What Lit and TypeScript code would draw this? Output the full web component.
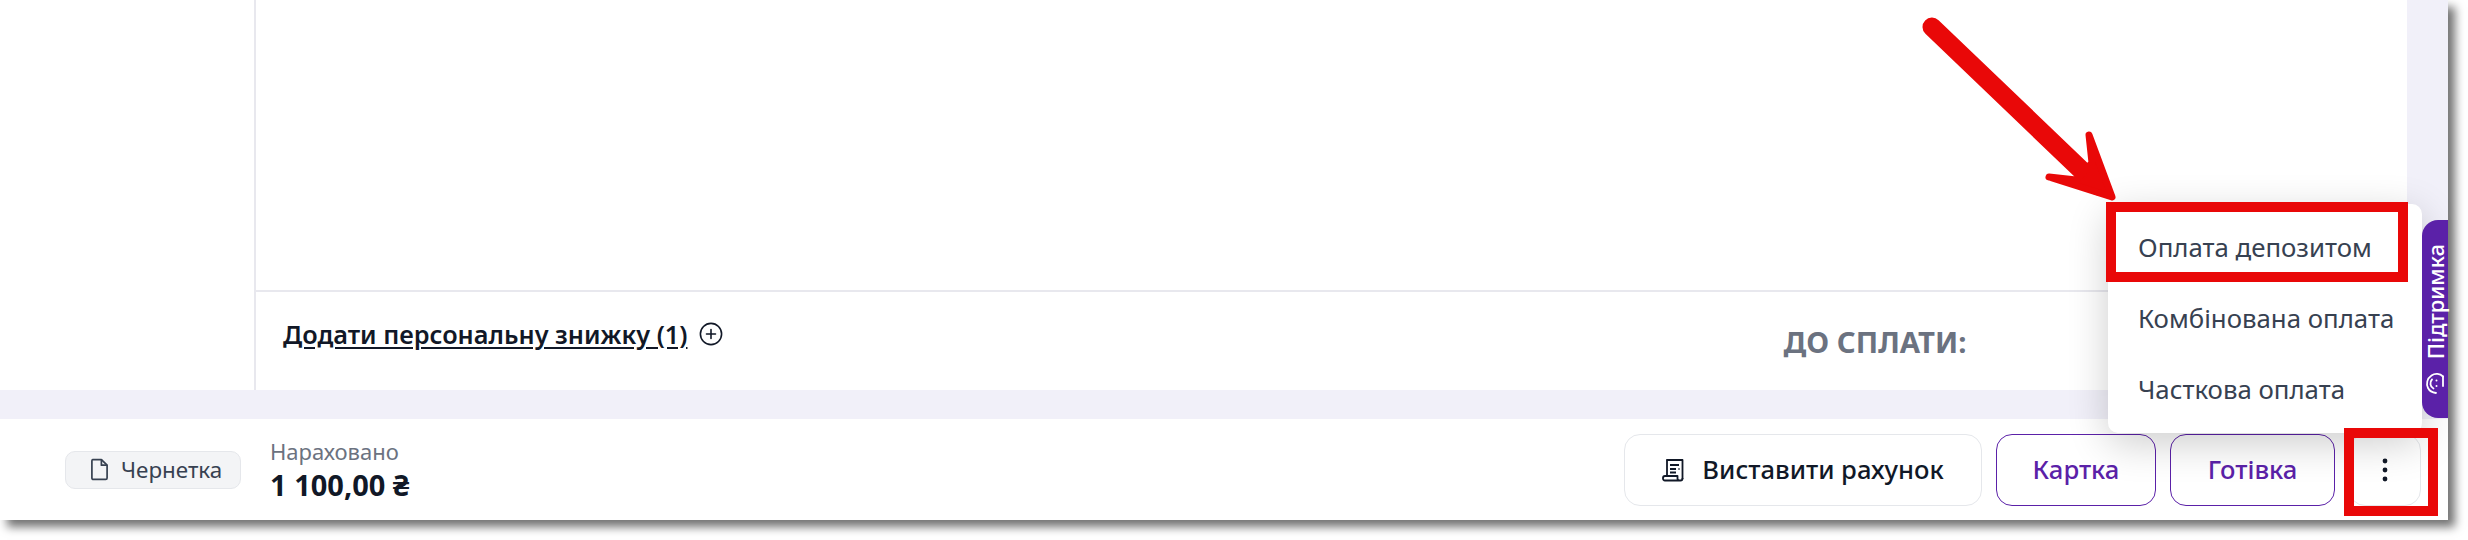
import { LitElement, html, css, svg } from "lit";
import { customElement } from "lit/decorators.js";

@customElement("app-root")
export class AppRoot extends LitElement {
  static styles = css`
    :host { display: block; height: 540px; background: #fff; font-family: "Noto Sans", sans-serif; color: #111827; }
    .shell { position: relative; width: 2448px; height: 520px; background: #f1f0f9; display: flex; flex-direction: column; box-shadow: 7px 7px 9px rgba(0,0,0,.55); }
    .top { height: 390px; display: flex; flex: none; }
    .side { width: 254px; background: #fff; flex: none; }
    .main { flex: 1; background: #fff; border-left: 2px solid #e8e8ee; display: flex; flex-direction: column; }
    .content { flex: 1; }
    .totals { height: 100px; box-sizing: border-box; flex: none; border-top: 2px solid #e8e8ee; display: flex; align-items: center; padding: 0 0 14px 27px; }
    .discount { font-size: 25.3px; font-weight: 600; text-decoration: underline; text-underline-offset: 3px; white-space: nowrap; }
    .plus { margin-left: 11px; width: 24px; height: 24px; flex: none; }
    .due { margin-left: 1061px; margin-top: 16px; font-size: 29.4px; font-weight: 700; color: #6b7280; white-space: nowrap; }
    .rail { width: 41px; flex: none; }
    .gap { height: 29px; flex: none; }
    .footer { flex: 1; background: #fff; display: flex; align-items: center; padding: 0 27px 0 65px; }
    .chip { width: 176px; height: 38px; box-sizing: border-box; border: 1px solid #e5e7eb; border-radius: 10px; background: #f3f4f6; display: flex; align-items: center; gap: 12px; padding-left: 24px; font-size: 22.4px; color: #374151; }
    .chip svg { width: 19px; height: 23px; flex: none; }
    .sum { margin-left: 29px; display: flex; flex-direction: column; }
    .sum .lbl { font-size: 22px; line-height: 30px; color: #6b7280; }
    .sum .val { font-size: 29px; line-height: 38px; font-weight: 700; white-space: nowrap; }
    .actions { margin-left: auto; display: flex; gap: 14px; }
    .btn { height: 72px; box-sizing: border-box; border-radius: 16px; display: flex; align-items: center; justify-content: center; font-size: 25.6px; font-weight: 500; background: #fff; white-space: nowrap; }
    .plain { width: 358px; border: 1px solid #e5e7eb; gap: 18px; }
    .plain svg { width: 22px; height: 24px; flex: none; }
    .outline { border: 1px solid #5b21a8; color: #5b21a8; }
    .card { width: 160px; }
    .cash { width: 165px; }
    .more { width: 72px; border: 1px solid #e5e7eb; }
    .more svg { width: 8px; height: 24px; }
    .menu { position: absolute; left: 2108px; top: 204px; width: 314px; height: 229px; background: #fff; border-radius: 10px; box-shadow: 0 10px 40px rgba(0,0,0,.2); display: flex; flex-direction: column; padding: 7px 0 9px; box-sizing: border-box; }
    .item { height: 71px; display: flex; align-items: center; padding-left: 30px; font-size: 25.8px; color: #374151; white-space: nowrap; }
    .tab { position: absolute; left: 2422px; top: 220px; width: 26px; height: 198px; background: #5b21a8; border-radius: 16px 0 0 16px; color: #fff; display: flex; align-items: center; justify-content: flex-end; flex-direction: column; gap: 13px; padding: 0 0 23px; box-sizing: border-box; font-size: 22px; font-weight: 500; }
    .tab span { writing-mode: vertical-rl; transform: rotate(180deg); white-space: nowrap; line-height: 26px; }
    .tab svg { width: 20px; height: 23px; flex: none; }
    .mark { position: absolute; box-sizing: border-box; border: 10px solid #e90808; pointer-events: none; }
    .m1 { left: 2106px; top: 202px; width: 302px; height: 80px; }
    .m2 { left: 2344px; top: 428px; width: 94px; height: 88px; }
    .arrow { position: absolute; left: 0; top: 0; width: 2448px; height: 300px; pointer-events: none; }
  `;

  render() {
    return html`
      <div class="shell">
        <div class="top">
          <div class="side"></div>
          <div class="main">
            <div class="content"></div>
            <div class="totals">
              <span class="discount">Додати персональну знижку (1)</span>
              <svg class="plus" viewBox="0 0 24 24" fill="none" stroke="#111827" stroke-width="1.6" stroke-linecap="round"><circle cx="12" cy="12" r="10.6"/><path d="M12 7.5v9M7.5 12h9"/></svg>
              <span class="due">ДО СПЛАТИ:</span>
            </div>
          </div>
          <div class="rail"></div>
        </div>
        <div class="gap"></div>
        <div class="footer">
          <div class="chip">
            <svg viewBox="0 0 20 24" fill="none" stroke="#374151" stroke-width="1.8" stroke-linejoin="round"><path d="M3 1.5h9l6 6v13.5a1.5 1.5 0 0 1-1.5 1.5h-13a1.5 1.5 0 0 1-1.5-1.5v-18a1.5 1.5 0 0 1 1-1.5z"/><path d="M12 1.5v6h6"/></svg>
            Чернетка
          </div>
          <div class="sum"><span class="lbl">Нараховано</span><span class="val">1 100,00 ₴</span></div>
          <div class="actions">
            <div class="btn plain">
              <svg viewBox="0 0 22 24" fill="none" stroke="#111827" stroke-width="1.8" stroke-linejoin="round"><path d="M5 17V2h15.5v19"/><path d="M5 1.5v1M8 1v1.5M11 1v1.5M14 1v1.5M17 1v1.5M20 1v1.5" stroke-width="1.4"/><path d="M3 18h12.5v2.5a2 2 0 0 0 2 2H3a2 2 0 0 1-2-2.2A2.2 2.2 0 0 1 3 18zM17.5 22.5h1a2 2 0 0 0 2-2V20"/><path d="M8 7h9M8 11h6M16.5 11h1M8 14.5h6"/></svg>
              Виставити рахунок
            </div>
            <div class="btn outline card">Картка</div>
            <div class="btn outline cash">Готівка</div>
            <div class="btn more"><svg viewBox="0 0 8 24" fill="#111827"><circle cx="4" cy="3" r="2.4"/><circle cx="4" cy="12" r="2.4"/><circle cx="4" cy="21" r="2.4"/></svg></div>
          </div>
        </div>
        <div class="menu">
          <div class="item">Оплата депозитом</div>
          <div class="item">Комбінована оплата</div>
          <div class="item">Часткова оплата</div>
        </div>
        <div class="tab">
          <span>Підтримка</span>
          <svg viewBox="0 0 20 23" fill="none" stroke="#fff" stroke-width="1.8" stroke-linecap="round"><path d="M18 4.5C15 1.5 10 1 6.5 3.5 2 6.5 1 12 3 16c1.500 3 4 4.500 8 5"/><path d="M18 4.500V14"/><path d="M7 7.500C4.500 10 5 15 8.500 16.500"/><circle cx="11.500" cy="8.500" r="1" fill="#fff" stroke="none"/><circle cx="11.500" cy="14" r="1" fill="#fff" stroke="none"/></svg>
        </div>
        <div class="mark m1"></div>
        <div class="mark m2"></div>
        <svg class="arrow" viewBox="0 0 2448 300">
          ${svg`<path d="M1932 27 L2098 186" stroke="#e90808" stroke-width="19" stroke-linecap="round" fill="none"/>
          <path d="M2089 135 L2112 197 L2049 177 L2076 180 L2092 163 Z" fill="#e90808" stroke="#e90808" stroke-width="7" stroke-linejoin="round"/>`}
        </svg>
      </div>
    `;
  }
}
